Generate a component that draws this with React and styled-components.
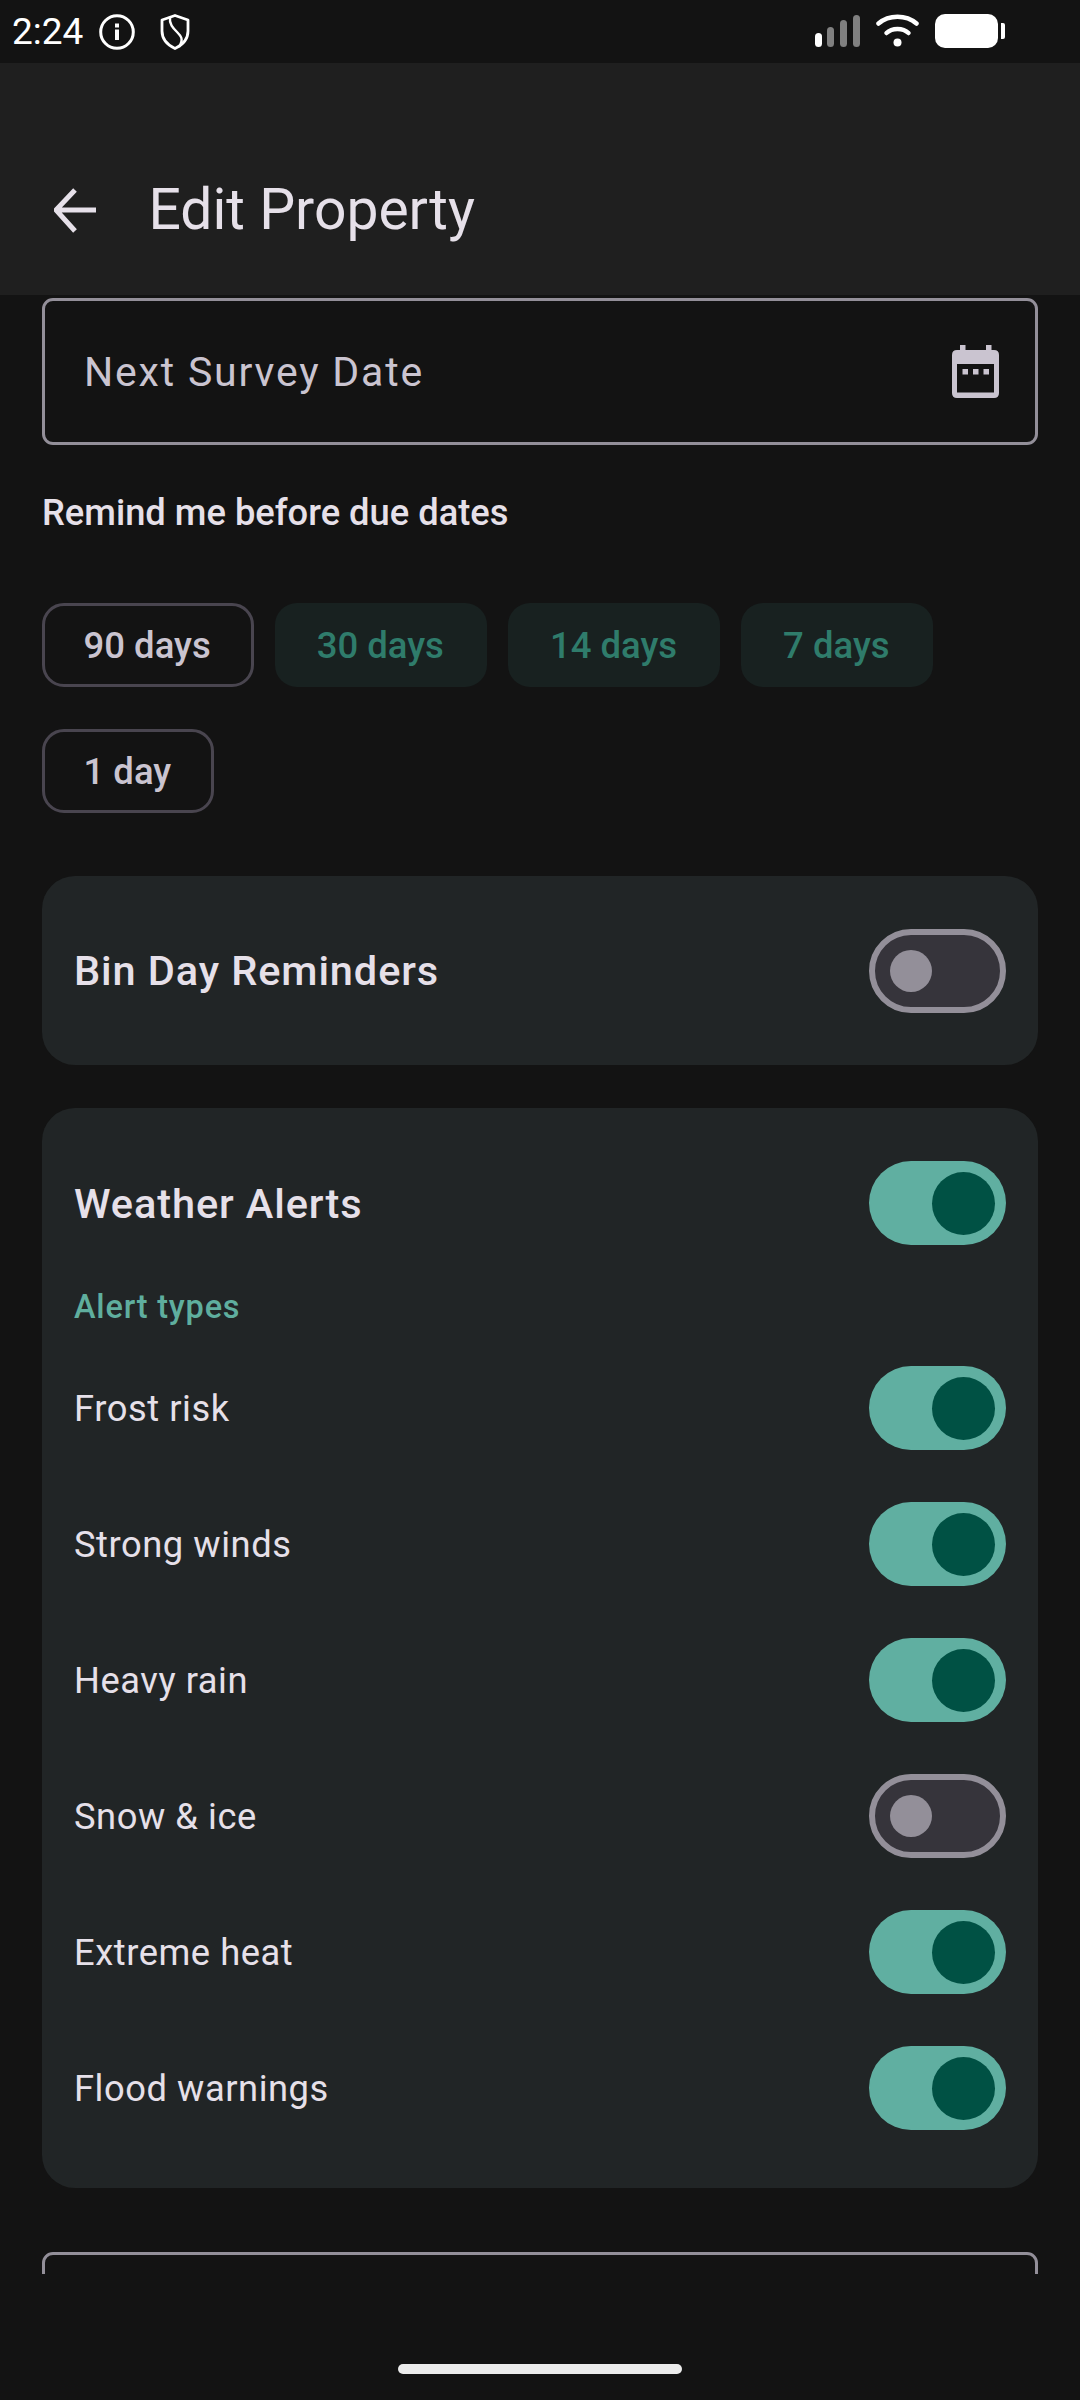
import React from "react";
import styled, { createGlobalStyle } from "styled-components";

const GlobalStyle = createGlobalStyle`
  html, body {
    margin: 0;
    padding: 0;
    background: #131313;
    font-family: Roboto, "Noto Sans", sans-serif;
  }
  * { box-sizing: border-box; }
`;

const Screen = styled.div`
  width: 1080px;
  height: 2400px;
  display: flex;
  flex-direction: column;
  background: #131313;
  overflow: hidden;
`;

const StatusBar = styled.div`
  height: 63px;
  padding: 14px 0 0 12px;
  display: flex;
  align-items: flex-start;
  color: #fff;
`;

const Time = styled.span`
  font-size: 37px;
  line-height: 36px;
  width: 87px;
`;

const StatusRight = styled.div`
  margin-left: auto;
  margin-right: 75px;
  display: flex;
  align-items: flex-start;
`;

const AppBar = styled.header`
  height: 232px;
  background: #1f1f1f;
  display: flex;
  align-items: flex-end;
  padding: 0 0 43px 54px;
`;

const Title = styled.h1`
  margin: 0 0 0 52.5px;
  font-size: 57px;
  line-height: 84px;
  font-weight: 400;
  color: #e6e0e9;
`;

const Content = styled.main`
  height: 1979px;
  overflow: hidden;
  padding: 3px 42px 0;
`;

const Field = styled.div`
  height: 147px;
  border: 3px solid #938f99;
  border-radius: 11px;
  display: flex;
  align-items: center;
  justify-content: space-between;
  padding: 0 36px 0 39px;
  margin-top: ${(p) => p.$top || 0}px;
`;

const FieldLabel = styled.span`
  font-size: 41px;
  letter-spacing: 1.8px;
  color: #cac4d0;
`;

const Label = styled.div`
  margin-top: 44px;
  font-size: 36.3px;
  line-height: 48px;
  font-weight: 500;
  color: #e6e0e9;
`;

const Chips = styled.div`
  margin-top: 66px;
  display: flex;
  flex-wrap: wrap;
  gap: 42px 21px;
`;

const Chip = styled.div`
  height: 84px;
  padding: ${(p) => (p.$on ? "0 43px 0 42px" : "0 40px 0 38.5px")};
  border-radius: 22px;
  display: flex;
  align-items: center;
  font-size: 36.5px;
  font-weight: 500;
  border: ${(p) => (p.$on ? "none" : "3px solid #49454f")};
  background: ${(p) => (p.$on ? "#182120" : "transparent")};
  color: ${(p) => (p.$on ? "#2f7c6b" : "#cac4d0")};
`;

const Card = styled.section`
  margin-top: ${(p) => p.$top}px;
  background: #212526;
  border-radius: 33px;
  padding: ${(p) => p.$pad};
`;

const Row = styled.div`
  height: ${(p) => p.$height}px;
  display: flex;
  align-items: center;
  justify-content: space-between;
`;

const CardTitle = styled.span`
  font-size: 41.5px;
  font-weight: 500;
  letter-spacing: 0.9px;
  color: #e6e0e9;
`;

const SubHead = styled.div`
  height: 42px;
  margin: 41px 0 12px;
  line-height: 42px;
  font-size: 32.5px;
  font-weight: 500;
  letter-spacing: 0.8px;
  color: #5fae9e;
`;

const RowLabel = styled.span`
  font-size: 36.3px;
  letter-spacing: 0.55px;
  color: #e6e0e9;
`;

const Track = styled.div`
  width: 137px;
  height: 84px;
  flex: none;
  border-radius: 42px;
  display: flex;
  align-items: center;
  border: ${(p) => (p.$on ? "none" : "6px solid #938f99")};
  background: ${(p) => (p.$on ? "#60afa1" : "#36343b")};
  padding: ${(p) => (p.$on ? "0 11px 0 0" : "0 0 0 15px")};
  justify-content: ${(p) => (p.$on ? "flex-end" : "flex-start")};
`;

const Knob = styled.div`
  width: ${(p) => (p.$on ? 63 : 42)}px;
  height: ${(p) => (p.$on ? 63 : 42)}px;
  border-radius: 50%;
  background: ${(p) => (p.$on ? "#005144" : "#938f99")};
`;

const Footer = styled.div`
  flex: 1;
  display: flex;
  justify-content: center;
  padding-top: 90px;
`;

const HomePill = styled.div`
  width: 284px;
  height: 10px;
  border-radius: 5px;
  background: #ececec;
`;

const IconSlot = styled.svg`
  display: block;
  flex: none;
  margin-right: ${(p) => p.$gap || 0}px;
`;

const Switch = ({ on }) => (
  <Track $on={on}>
    <Knob $on={on} />
  </Track>
);

const InfoIcon = () => (
  <IconSlot width="36" height="36" viewBox="0 0 36 36" $gap="25" fill="none">
    <circle cx="18" cy="18" r="16.3" stroke="#fff" strokeWidth="3" />
    <rect x="16" y="15.5" width="4" height="10.5" fill="#fff" />
    <rect x="16" y="9.5" width="4" height="4" fill="#fff" />
  </IconSlot>
);

const ShieldIcon = () => (
  <IconSlot width="30" height="36" viewBox="0 0 30 36" fill="none">
    <path
      d="M15 1.5 L28 6 V17 C28 25 22.5 31 15 34.5 C7.5 31 2 25 2 17 V6 Z"
      stroke="#fff"
      strokeWidth="2.8"
      strokeLinejoin="round"
    />
    <path d="M10 3 C9 10 13 14 17 18 C21 22 24 25 19 33" stroke="#fff" strokeWidth="2.4" />
  </IconSlot>
);

const SignalIcon = () => (
  <IconSlot width="45" height="34" viewBox="0 0 45 34" $gap="16">
    <rect x="0" y="19" width="7" height="14" rx="3.5" fill="#fff" />
    <rect x="12" y="13" width="7" height="20" rx="3.5" fill="#808080" />
    <rect x="25" y="6" width="7" height="27" rx="3.5" fill="#808080" />
    <rect x="38" y="1" width="7" height="32" rx="3.5" fill="#808080" />
  </IconSlot>
);

const WifiIcon = () => (
  <IconSlot width="43" height="34" viewBox="0 0 43 34" $gap="16" fill="none">
    <path d="M2.5 9.5 C13 0.5 30 0.5 40.5 9.5" stroke="#fff" strokeWidth="4.5" strokeLinecap="round" />
    <path d="M10.5 19 C16 13.5 27 13.5 32.5 19" stroke="#fff" strokeWidth="4.5" strokeLinecap="round" />
    <circle cx="21.5" cy="28.5" r="4" fill="#fff" />
  </IconSlot>
);

const BatteryIcon = () => (
  <IconSlot width="70" height="36" viewBox="0 0 70 36">
    <rect x="0" y="0" width="63" height="34" rx="10" fill="#fff" />
    <path d="M66 9 H68 Q70 9 70 11 V23 Q70 25 68 25 H66 Z" fill="#fff" />
  </IconSlot>
);

const BackArrow = () => (
  <IconSlot width="42" height="84" viewBox="0 0 42 84" fill="none">
    <path d="M42 42 H3 M21 22 L2 42 L21 63" stroke="#e6e0e9" strokeWidth="5" />
  </IconSlot>
);

const CalendarIcon = () => (
  <IconSlot width="47" height="53" viewBox="0 0 47 53">
    <path
      fillRule="evenodd"
      fill="#cac4d0"
      d="M8 0 H13.5 V5 H34 V0 H39.5 V5 H42 Q47 5 47 10 V48 Q47 53 42 53 H5 Q0 53 0 48 V10 Q0 5 5 5 H8 Z M5 19 V47.5 H42 V19 Z"
    />
    <rect x="10.5" y="24" width="5.5" height="5.5" fill="#cac4d0" />
    <rect x="21" y="24" width="5.5" height="5.5" fill="#cac4d0" />
    <rect x="31.5" y="24" width="5.5" height="5.5" fill="#cac4d0" />
  </IconSlot>
);

const chips = [
  { label: "90 days", on: false },
  { label: "30 days", on: true },
  { label: "14 days", on: true },
  { label: "7 days", on: true },
  { label: "1 day", on: false },
];

const alerts = [
  { label: "Frost risk", on: true },
  { label: "Strong winds", on: true },
  { label: "Heavy rain", on: true },
  { label: "Snow & ice", on: false },
  { label: "Extreme heat", on: true },
  { label: "Flood warnings", on: true },
];

export default function App() {
  return (
    <Screen>
      <GlobalStyle />
      <StatusBar>
        <Time>2:24</Time>
        <InfoIcon />
        <ShieldIcon />
        <StatusRight>
          <SignalIcon />
          <WifiIcon />
          <BatteryIcon />
        </StatusRight>
      </StatusBar>

      <AppBar>
        <BackArrow />
        <Title>Edit Property</Title>
      </AppBar>

      <Content>
        <Field>
          <FieldLabel>Next Survey Date</FieldLabel>
          <CalendarIcon />
        </Field>

        <Label>Remind me before due dates</Label>
        <Chips>
          {chips.map((c) => (
            <Chip key={c.label} $on={c.on}>
              {c.label}
            </Chip>
          ))}
        </Chips>

        <Card $top={63} $pad="0 32px">
          <Row $height={189}>
            <CardTitle>Bin Day Reminders</CardTitle>
            <Switch on={false} />
          </Row>
        </Card>

        <Card $top={43} $pad="53px 32px 32px">
          <Row $height={84}>
            <CardTitle>Weather Alerts</CardTitle>
            <Switch on />
          </Row>
          <SubHead>Alert types</SubHead>
          {alerts.map((a) => (
            <Row key={a.label} $height={136}>
              <RowLabel>{a.label}</RowLabel>
              <Switch on={a.on} />
            </Row>
          ))}
        </Card>

        <Field $top={64} />
      </Content>

      <Footer>
        <HomePill />
      </Footer>
    </Screen>
  );
}
